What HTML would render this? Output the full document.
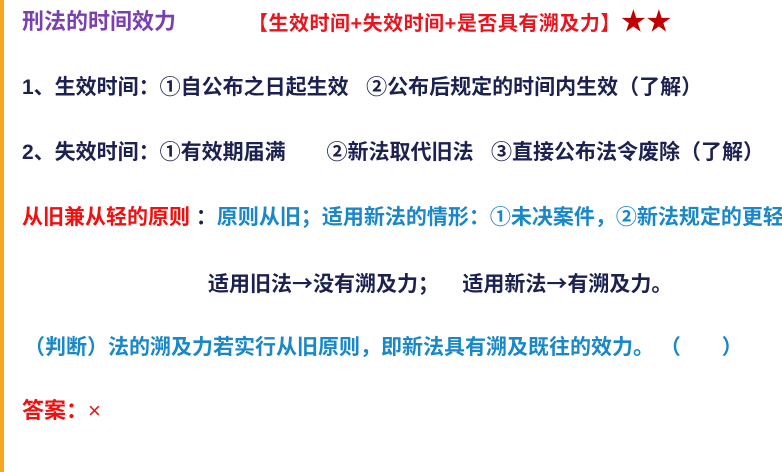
<!DOCTYPE html><html><head><meta charset="utf-8"><style>
body{margin:0;width:782px;height:472px;background:#fff;position:relative;overflow:hidden;font-family:"Liberation Sans","Noto Sans CJK SC",sans-serif;font-weight:bold}
.b{position:absolute;left:0;top:0;width:4px;height:472px;background:#f5a623}
.t{position:absolute;white-space:nowrap;font-size:21px;line-height:26px}
.a{font-family:"Noto Sans CJK SC",sans-serif}
</style></head><body><div class="b"></div>
<div class="t" style="left:22px;top:9px;color:#7a3fb0;font-size:22px">刑法的时间效力</div>
<div class="t" style="left:248px;top:9px;color:#e8141e;font-size:20px;letter-spacing:0.5px">【生效时间+失效时间+是否具有溯及力】<span style="color:#c00000;font-size:25px">★★</span></div>
<div class="t" style="left:22px;top:75px;color:#1c2150">1、生效时间：①自公布之日起生效 &nbsp; ②公布后规定的时间内生效（了解）</div>
<div class="t" style="left:22px;top:140px;color:#1c2150">2、失效时间：①有效期届满 &nbsp; &nbsp; &nbsp; ②新法取代旧法 &nbsp; ③直接公布法令废除（了解）</div>
<div class="t" style="left:22px;top:205px;color:#1a87c8"><span style="color:#f01010">从旧兼从轻的原则</span> <span style="color:#1c2150">：</span>原则从旧；适用新法的情形：①未决案件，②新法规定的更轻</div>
<div class="t" style="left:208px;top:270px;color:#1c2150">适用旧法<span class="a">→</span>没有溯及力； &nbsp; &nbsp;适用新法<span class="a">→</span>有溯及力。</div>
<div class="t" style="left:24px;top:335px;color:#1a87c8">（判断）法的溯及力若实行从旧原则，即新法具有溯及既往的效力。 （ &nbsp; &nbsp; &nbsp; ）</div>
<div class="t" style="left:22px;top:398px;color:#f01010;font-size:22px">答案：<span style="font-weight:normal">×</span></div>
</body></html>
